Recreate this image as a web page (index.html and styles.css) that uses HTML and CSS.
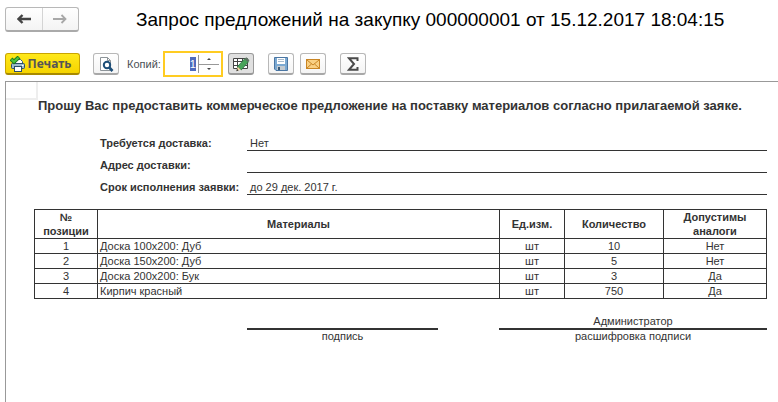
FILE: index.html
```html
<!DOCTYPE html>
<html lang="ru">
<head>
<meta charset="utf-8">
<title>Запрос предложений на закупку</title>
<link rel="stylesheet" href="styles.css">
</head>
<body>
<header class="titlebar">
  <nav class="history">
    <button type="button" class="history-btn" aria-label="Назад">
      <svg width="14" height="10" viewBox="0 0 14 10"><path d="M5.500 1 1.500 5l4 4M2 5h12" fill="none" stroke="#444" stroke-width="2.400"/></svg>
    </button>
    <button type="button" class="history-btn" aria-label="Вперед">
      <svg width="14" height="10" viewBox="0 0 14 10"><path d="M8.500 1l4 4-4 4M12 5H0" fill="none" stroke="#a8a8a8" stroke-width="1.800"/></svg>
    </button>
  </nav>
  <h1 class="title">Запрос предложений на закупку 000000001 от 15.12.2017 18:04:15</h1>
</header>

<div class="toolbar">
  <button type="button" class="btn btn-print">
    <svg width="16" height="16" viewBox="0 0 16 16">
      <path d="M5.500 8V3.500h5l2 2V8" fill="#fff" stroke="#355a78"/>
      <rect x="1.500" y="7.500" width="13" height="5" rx="1" fill="#9dbacd" stroke="#2c4f6b"/>
      <rect x="4.500" y="10.500" width="7" height="5" fill="#fff" stroke="#2c4f6b"/>
      <path d="M12 9.500h1.500" stroke="#fff"/>
      <path d="M1 3 4 5.800 9 1" fill="none" stroke="#1d7a1d" stroke-width="4"/>
      <path d="M1.500 3.500 4 5.800 8.500 1.500" fill="none" stroke="#4cc43c" stroke-width="2"/>
    </svg>
    Печать
  </button>
  <button type="button" class="btn btn-preview" aria-label="Просмотр">
    <svg width="16" height="16" viewBox="0 0 16 16">
      <path d="M2.500 1.500h7l3 3v10h-10z" fill="#fff" stroke="#8d9499"/>
      <path d="M9.500 1.500v3h3" fill="none" stroke="#8d9499"/>
      <circle cx="9" cy="9" r="3.200" fill="#fff" stroke="#1d4e78" stroke-width="2"/>
      <path d="M11.300 11.500 14.500 15" stroke="#1d4e78" stroke-width="2.600"/>
    </svg>
  </button>
  <label class="copies-label" for="copies">Копий:</label>
  <div class="copies">
    <input id="copies" class="copies-input" type="text" value="1">
    <div class="spin">
      <button type="button" class="spin-btn" aria-label="Больше"><svg width="4" height="2" viewBox="0 0 4 2"><path d="M0 2 2 0 4 2z" fill="#444"/></svg></button>
      <button type="button" class="spin-btn" aria-label="Меньше"><svg width="4" height="2" viewBox="0 0 4 2"><path d="M0 0 2 2 4 0z" fill="#444"/></svg></button>
    </div>
  </div>
  <button type="button" class="btn btn-edit" aria-label="Редактирование">
    <svg width="18" height="16" viewBox="0 0 18 16">
      <path d="M1.500 2.500h14v10h-14zM1.500 5.500h14M1.500 9.500h14M5.500 2.500v10M10.500 2.500v10" fill="#fff" stroke="#444"/>
      <path d="M5.500 10.500 13 2.500l3.500 3.200L9.200 14z" fill="#48a45a" stroke="#2b7040" stroke-width=".8"/>
      <path d="m12.500 3 1.800-1.800 3.200 3L15.800 6z" fill="#5d7262"/>
      <path d="M4.500 15 5.700 10.800l3.200 3z" fill="#f0d6a0"/>
      <path d="m4.300 15.200.7-2.400 1.600 1.600z" fill="#333"/>
    </svg>
  </button>
  <button type="button" class="btn btn-save" aria-label="Сохранить">
    <svg width="14" height="14" viewBox="0 0 14 14">
      <path d="M.5.5h13v13H2L.5 12z" fill="#7ba9d2" stroke="#4a76a3"/>
      <rect x="3" y="1" width="8" height="6" fill="#fff"/>
      <path d="M4 2.500h6M4 4.500h6" stroke="#a9bccd"/>
      <rect x="3" y="9" width="8" height="4" fill="#c3cad0"/>
      <rect x="4" y="10" width="2" height="3" fill="#385a78"/>
    </svg>
  </button>
  <button type="button" class="btn btn-mail" aria-label="Отправить">
    <svg width="14" height="10" viewBox="0 0 14 10">
      <rect x=".5" y=".5" width="13" height="9" fill="#f9d083" stroke="#c98524"/>
      <path d="M1 1l6 5 6-5M1 9l4.500-4M13 9 8.500 5" fill="none" stroke="#c98524"/>
    </svg>
  </button>
  <button type="button" class="btn btn-sum" aria-label="Сумма">
    <svg width="12" height="14" viewBox="0 0 12 14"><path d="M10.500 4V1.200H2L7 7l-5 5.800h8.500V10" fill="none" stroke="#4a4a4a" stroke-width="2"/></svg>
  </button>
</div>

<main class="sheet">
  <div class="corner"></div>
  <h2 class="request">Прошу Вас предоставить коммерческое предложение на поставку материалов согласно прилагаемой заяке.</h2>

  <dl class="fields">
    <dt>Требуется доставка:</dt><dd>Нет</dd>
    <dt>Адрес доставки:</dt><dd></dd>
    <dt>Срок исполнения заявки:</dt><dd>до 29 дек. 2017 г.</dd>
  </dl>

  <table class="items">
    <colgroup><col class="c-num"><col><col class="c-unit"><col class="c-qty"><col class="c-alt"></colgroup>
    <thead>
      <tr><th>№ позиции</th><th>Материалы</th><th>Ед.изм.</th><th>Количество</th><th>Допустимы аналоги</th></tr>
    </thead>
    <tbody>
      <tr><td>1</td><td class="name">Доска 100х200: Дуб</td><td>шт</td><td>10</td><td>Нет</td></tr>
      <tr><td>2</td><td class="name">Доска 150х200: Дуб</td><td>шт</td><td>5</td><td>Нет</td></tr>
      <tr><td>3</td><td class="name">Доска 200х200: Бук</td><td>шт</td><td>3</td><td>Да</td></tr>
      <tr><td>4</td><td class="name">Кирпич красный</td><td>шт</td><td>750</td><td>Да</td></tr>
    </tbody>
  </table>

  <div class="signatures">
    <div class="signature"><div class="sign-value"></div><div class="sign-caption">подпись</div></div>
    <div class="signature"><div class="sign-value">Администратор</div><div class="sign-caption">расшифровка подписи</div></div>
  </div>
</main>
</body>
</html>
```

FILE: styles.css
```css
* { box-sizing: border-box; }

body {
  margin: 0;
  min-height: 100vh;
  display: flex;
  flex-direction: column;
  background: #fff;
  color: #333;
  font: 11px/13px "Liberation Sans", Arial, sans-serif;
}

button, input { font: inherit; color: inherit; }
button { padding: 0; }
svg { display: block; flex: none; }

.titlebar {
  display: flex;
  align-items: center;
  gap: 57px;
  padding: 7px 5px 0;
}

.history {
  display: flex;
  flex: none;
  width: 74px;
  height: 25px;
  border: 1px solid #b8b8b8;
  border-bottom: 2px solid #aaa;
  border-radius: 3px;
  background: linear-gradient(#fff, #f4f4f4);
}

.history-btn {
  flex: 1;
  display: flex;
  align-items: center;
  justify-content: center;
  border: 0;
  background: none;
}

.history-btn + .history-btn { border-left: 1px solid #d4d4d4; }

.title {
  margin: 0;
  color: #000;
  font-size: 19px;
  line-height: 25px;
  font-weight: normal;
  white-space: nowrap;
}

.toolbar {
  display: flex;
  align-items: center;
  padding: 19px 5px 4px;
}

.btn {
  display: flex;
  align-items: center;
  justify-content: center;
  flex: none;
  width: 26px;
  height: 22px;
  border: 1px solid #b8b8b8;
  border-bottom: 2px solid #a8a8a8;
  border-radius: 3px;
  background: linear-gradient(#fff, #f4f4f4);
}

.btn-print {
  width: 75px;
  gap: 2px;
  padding-right: 4px;
  border-color: #c9a400;
  border-bottom-color: #a88a00;
  background: linear-gradient(#ffe81a, #f5d400);
  color: #555;
  font: bold 12px/14px "Noto Sans", sans-serif;
}

.btn-preview { margin-left: 13px; }
.copies-label { margin-left: 8px; color: #4a4f55; }

.copies {
  display: flex;
  width: 60px;
  height: 26px;
  margin-left: 2px;
  padding: 2px;
  border: 2px solid #fc2;
}

.copies-input {
  flex: 1;
  width: 0;
  min-width: 0;
  margin: 2px 2px 2px 0;
  padding: 0;
  border: 0;
  background: linear-gradient(#4f6bbd, #4f6bbd) right center / 6px 14px no-repeat;
  color: #fff;
  text-align: right;
  outline: 0;
}

.spin {
  display: flex;
  flex-direction: column;
  width: 21px;
  border-left: 1px solid #999;
}

.spin-btn {
  flex: 1;
  display: flex;
  align-items: center;
  justify-content: center;
  border: 0;
  background: none;
}

.spin-btn + .spin-btn { border-top: 1px solid #999; }

.btn-edit {
  margin-left: 5px;
  border-color: #999;
  background: #e0e0e0;
}

.btn-save { margin-left: 14px; }
.btn-mail { margin-left: 6px; }
.btn-sum { margin-left: 14px; }

.sheet {
  flex: 1;
  margin-left: 5px;
  padding: 0 11px 0 28px;
  border-top: 1px solid #999;
  border-left: 1px solid #999;
}

.corner {
  width: 32px;
  height: 18px;
  margin-left: -28px;
  border-right: 2px solid #eee;
  border-bottom: 2px solid #eee;
}

.request {
  margin: -2px 0 0 4px;
  font-size: 13px;
  line-height: 16px;
  white-space: nowrap;
}

.fields {
  display: grid;
  grid-template-columns: 147px 1fr;
  grid-auto-rows: 22px;
  margin: 15px 0 0 66px;
}

.fields dt,
.fields dd {
  margin: 0;
  padding-top: 8px;
  white-space: nowrap;
}

.fields dt { font-weight: bold; }

.fields dd {
  padding-left: 3px;
  border-bottom: 1px solid #333;
}

.items {
  width: 100%;
  margin-top: 14px;
  table-layout: fixed;
  border-collapse: collapse;
}

.c-num { width: 63px; }
.c-unit { width: 65px; }
.c-qty { width: 99px; }
.c-alt { width: 103px; }

.items th,
.items td {
  padding: 1px 2px 0;
  border: 1px solid #333;
  text-align: center;
}

.items th { line-height: 14px; padding: 0 2px; }
.items .name { text-align: left; }

.signatures {
  display: grid;
  grid-template-columns: 191px 1fr;
  gap: 61px;
  margin: 16px 0 0 213px;
  text-align: center;
}

.sign-value {
  height: 15px;
  border-bottom: 2px solid #333;
}
```
